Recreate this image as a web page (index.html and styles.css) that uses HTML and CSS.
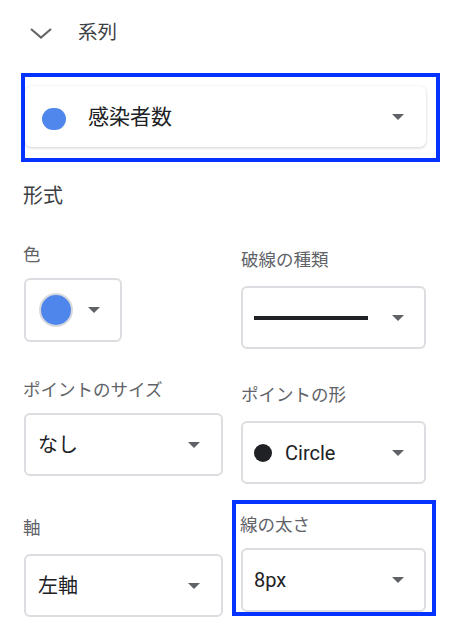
FILE: index.html
```html
<!DOCTYPE html>
<html lang="ja">
<head>
<meta charset="utf-8">
<link rel="stylesheet" href="styles.css">
</head>
<body>
<div class="panel">
  <div class="header">
    <svg class="chevron" width="24" height="12" viewBox="0 0 24 12"><polyline points="2,2 12,10.5 22,2" fill="none" stroke="#666" stroke-width="2.2"/></svg>
    <span class="header-title">系列</span>
  </div>

  <div class="highlight highlight--series">
    <div class="series-card">
      <span class="series-dot"></span>
      <span class="series-name">感染者数</span>
      <span class="caret"></span>
    </div>
  </div>

  <div class="section-title">形式</div>

  <div class="row row--a">
    <div class="field field--left">
      <div class="label">色</div>
      <div class="select select--color">
        <span class="color-swatch"></span>
        <span class="caret"></span>
      </div>
    </div>
    <div class="field field--right field--shift">
      <div class="label">破線の種類</div>
      <div class="select select--wide">
        <span class="line-sample"></span>
        <span class="caret"></span>
      </div>
    </div>
  </div>

  <div class="row row--b">
    <div class="field field--left">
      <div class="label">ポイントのサイズ</div>
      <div class="select select--left">
        <span class="value">なし</span>
        <span class="caret"></span>
      </div>
    </div>
    <div class="field field--right field--shift">
      <div class="label">ポイントの形</div>
      <div class="select select--wide">
        <span class="point-dot"></span>
        <span class="value value--latin">Circle</span>
        <span class="caret"></span>
      </div>
    </div>
  </div>

  <div class="row row--c">
    <div class="field field--left field--axis">
      <div class="label">軸</div>
      <div class="select select--left select--axis">
        <span class="value">左軸</span>
        <span class="caret"></span>
      </div>
    </div>
    <div class="highlight highlight--width">
      <div class="label">線の太さ</div>
      <div class="select select--wide select--inbox">
        <span class="value value--latin">8px</span>
        <span class="caret"></span>
      </div>
    </div>
  </div>
</div>
</body>
</html>
```

FILE: styles.css
```css
* { box-sizing: border-box; }

html, body {
  margin: 0;
  background: #ffffff;
}

body {
  font-family: Roboto, "Noto Sans CJK JP", sans-serif;
  color: #202124;
}

.panel {
  width: 456px;
  height: 632px;
  overflow: hidden;
}

.header {
  height: 65px;
  display: flex;
  align-items: center;
  padding-left: 29px;
}

.chevron { display: block; }

.header-title {
  margin-left: 25px;
  font-size: 19.5px;
  line-height: 24px;
  color: #3c4043;
}

.highlight {
  border: 4px solid #0433ff;
}

.highlight--series {
  margin-top: 8px;
  margin-left: 21px;
  width: 419px;
  height: 89px;
  padding: 9px 10px 0 0;
}

.series-card {
  height: 61px;
  border-radius: 6px;
  background: #fff;
  box-shadow: 0 1px 3px rgba(0, 0, 0, 0.18), 0 0 1px rgba(0, 0, 0, 0.08);
  display: flex;
  align-items: center;
  padding: 0 22px 0 17px;
}

.series-dot {
  width: 24px;
  height: 22px;
  border-radius: 11px;
  background: #5087ec;
  margin-top: 4px;
  margin-right: 22px;
  flex: none;
}

.series-name {
  font-size: 21px;
  line-height: 24px;
  color: #202124;
}

.caret {
  margin-left: auto;
  width: 0;
  height: 0;
  border-left: 6.5px solid transparent;
  border-right: 6.5px solid transparent;
  border-top: 6px solid #5f6368;
  flex: none;
}

.section-title {
  margin-top: 24px;
  margin-left: 23px;
  font-size: 20px;
  line-height: 20px;
  color: #3c4043;
}

.row {
  display: flex;
  align-items: flex-start;
  padding-left: 23px;
}

.row--a { margin-top: 39px; }
.row--b { margin-top: 31px; }
.row--c { margin-top: 16px; }

.field {
  display: flex;
  flex-direction: column;
  align-items: flex-start;
}

.field--left { width: 218px; }
.field--shift { margin-top: 5px; }
.field--axis { width: 209px; margin-top: 18px; }

.label {
  font-size: 17.5px;
  line-height: 20px;
  color: #5f6368;
}

.select {
  border: 2px solid #dcdde0;
  border-radius: 6px;
  display: flex;
  align-items: center;
  background: #fff;
}

.field--left .select { margin-left: 1px; margin-top: 13px; }
.field--right .select { margin-top: 16px; }
.field--left .select--axis { margin-top: 16px; }

.select--color {
  width: 98px;
  height: 64px;
  padding: 0 20px 0 13px;
}

.select--left {
  width: 199px;
  height: 63px;
  padding: 0 21px 0 12px;
}

.select--wide {
  width: 185px;
  height: 63px;
  padding: 0 20px 0 11px;
}

.color-swatch {
  width: 34px;
  height: 34px;
  border-radius: 50%;
  background: #4f86ec;
  border: 2px solid #d7d9de;
  flex: none;
}

.line-sample {
  width: 114px;
  height: 4px;
  background: #202124;
  flex: none;
}

.value {
  font-size: 20px;
  line-height: 24px;
  color: #202124;
}

.value--latin {
  font-family: Roboto, "Noto Sans CJK JP", sans-serif;
}

.point-dot {
  width: 18px;
  height: 18px;
  border-radius: 50%;
  background: #202124;
  margin-right: 13px;
  flex: none;
}

.highlight--width {
  width: 204px;
  height: 116px;
  padding: 11px 7px 0 4px;
  display: flex;
  flex-direction: column;
  align-items: flex-start;
}

.select--inbox { margin-top: 13px; margin-left: 1px; height: 64px; }
```
